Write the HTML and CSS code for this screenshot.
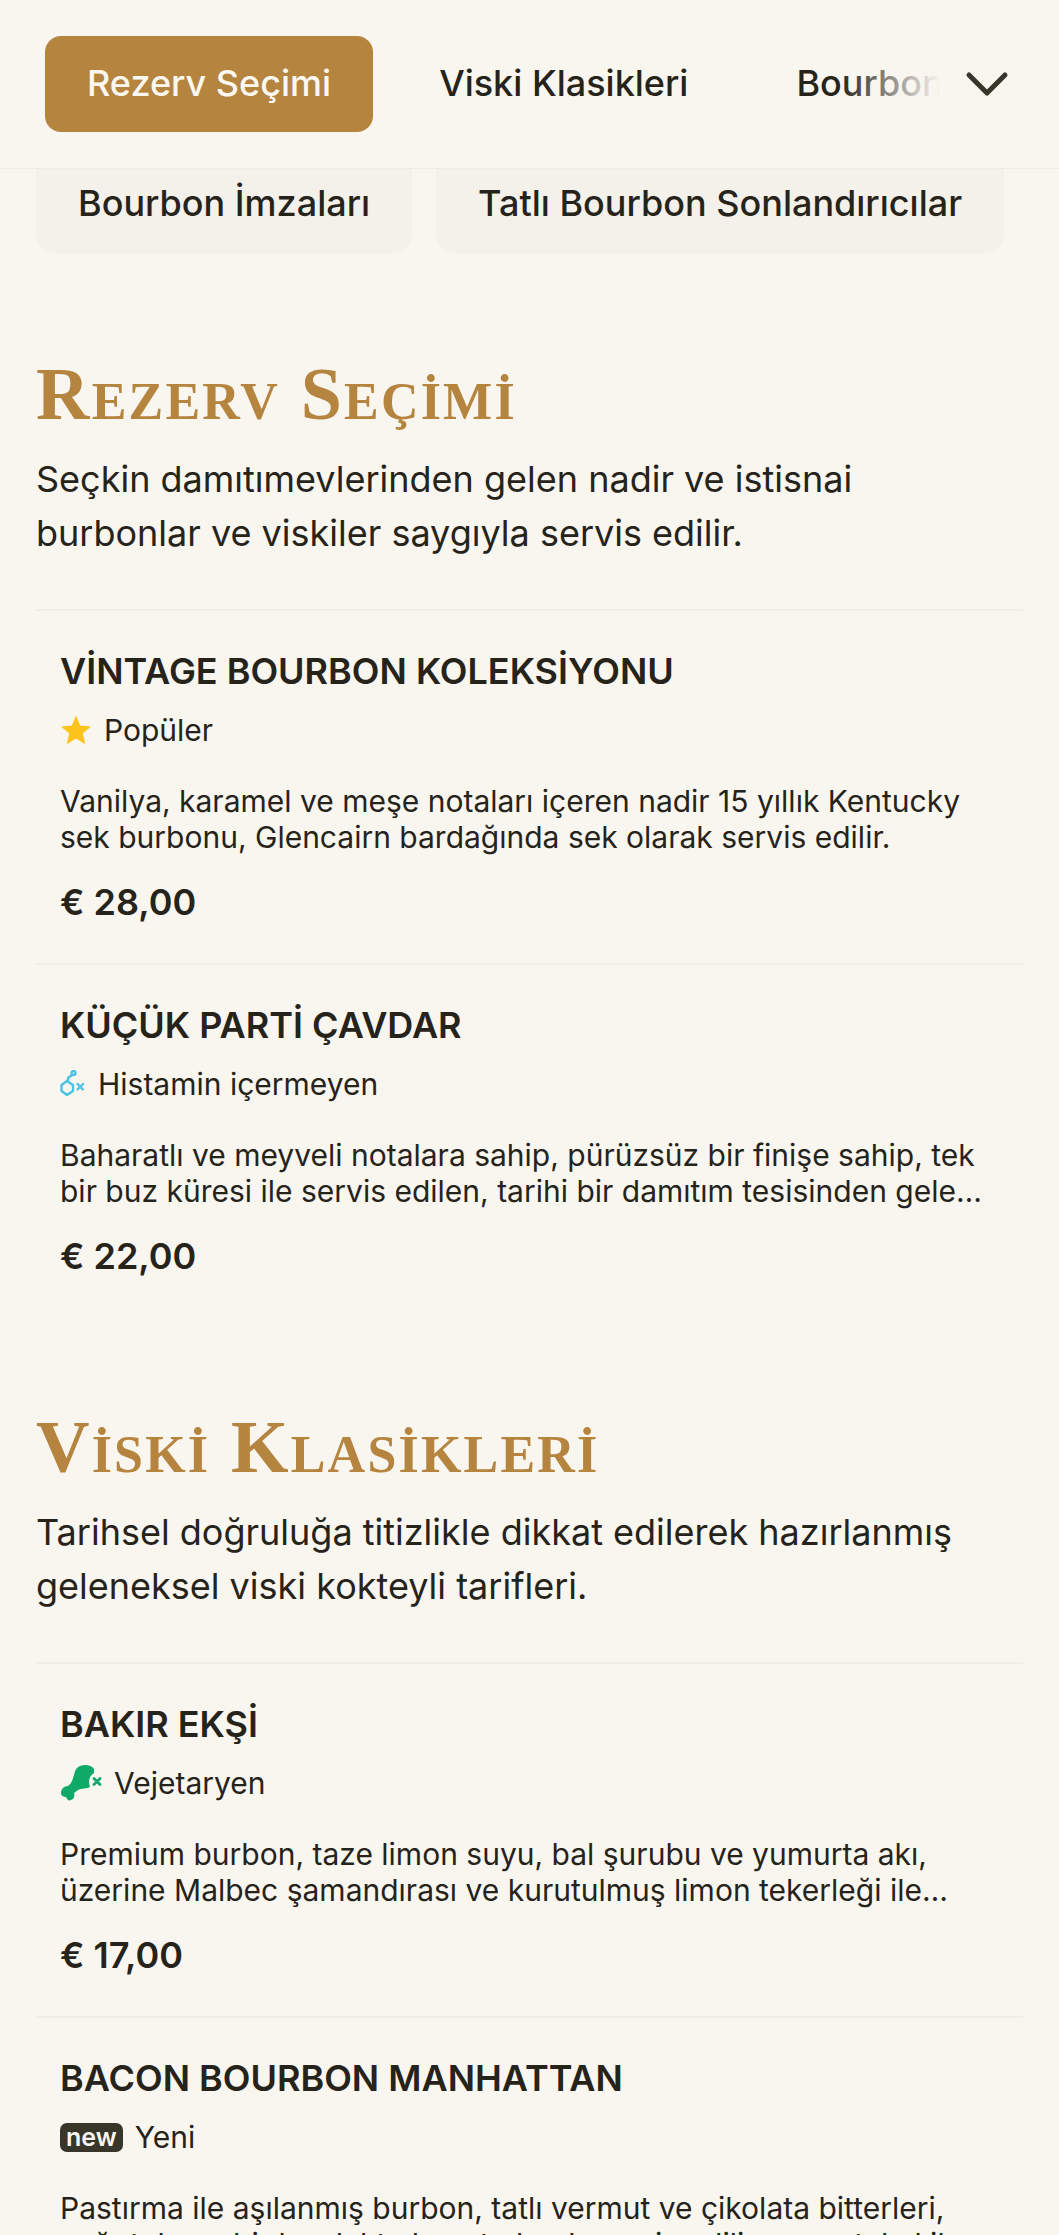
FILE: index.html
```html
<!DOCTYPE html>
<html lang="tr">
<head>
<meta charset="utf-8">
<title>Menü</title>
<link rel="stylesheet" href="styles.css">
</head>
<body>
<div class="page">
  <header class="topbar">
    <nav class="tabs">
      <a class="tab tab-active">Rezerv Seçimi</a>
      <a class="tab">Viski Klasikleri</a>
      <a class="tab">Bourbon İmzaları</a>
    </nav>
    <div class="fade"></div>
    <svg class="chevron" viewBox="0 0 44 28" width="44" height="28"><path d="M4 5 L22 23 L40 5" fill="none" stroke="#38352a" stroke-width="5" stroke-linecap="round" stroke-linejoin="round"/></svg>
  </header>
  <div class="dropdown">
    <a class="drop-item drop-first">Bourbon İmzaları</a>
    <a class="drop-item drop-second">Tatlı Bourbon Sonlandırıcılar</a>
  </div>

  <section class="section section-first">
    <h2 class="section-title">Rezerv Seçimi</h2>
    <p class="section-desc">Seçkin damıtımevlerinden gelen nadir ve istisnai burbonlar ve viskiler saygıyla servis edilir.</p>
    <article class="item">
      <h3 class="item-name">VİNTAGE BOURBON KOLEKSİYONU</h3>
      <div class="tag">
        <svg class="icon" viewBox="0 0 32 32" width="32" height="32"><path d="M16 1.5 L20.2 11.6 L31 12.5 L22.8 19.6 L25.3 30.2 L16 24.6 L6.7 30.2 L9.2 19.6 L1 12.5 L11.8 11.6 Z" fill="#fbc31c"/></svg>
        <span>Popüler</span>
      </div>
      <p class="item-desc">Vanilya, karamel ve meşe notaları içeren nadir 15 yıllık Kentucky sek burbonu, Glencairn bardağında sek olarak servis edilir.</p>
      <div class="price">€ 28,00</div>
    </article>
    <article class="item">
      <h3 class="item-name">KÜÇÜK PARTİ ÇAVDAR</h3>
      <div class="tag">
        <svg class="icon icon-hist" viewBox="0 0 26 28" width="26" height="28" fill="none" stroke="#4cc3e6" stroke-width="2.4" stroke-linecap="round" stroke-linejoin="round"><path d="M7 11 L13 15 L13 21 L7 25 L1.5 21 L1.5 15 Z"/><path d="M8 11 L8 8 L12 5"/><circle cx="13.5" cy="3" r="2"/><path d="M17.5 14 L23 19.5 M23 14 L17.5 19.5"/></svg>
        <span>Histamin içermeyen</span>
      </div>
      <p class="item-desc clamp">Baharatlı ve meyveli notalara sahip, pürüzsüz bir finişe sahip, tek bir buz küresi ile servis edilen, tarihi bir damıtım tesisinden gelen özel bir çavdar viskisi.</p>
      <div class="price">€ 22,00</div>
    </article>
  </section>

  <section class="section">
    <h2 class="section-title">Viski Klasikleri</h2>
    <p class="section-desc">Tarihsel doğruluğa titizlikle dikkat edilerek hazırlanmış geleneksel viski kokteyli tarifleri.</p>
    <article class="item">
      <h3 class="item-name">BAKIR EKŞİ</h3>
      <div class="tag">
        <svg class="icon icon-veg" viewBox="0 0 42 36" width="42" height="36"><path d="M34 4 C31 -1 21 -1 17 3 C14 6 14 13 11 18 L8 21 C4 21 1 24 1 28 C1 31 4 32 6 32 C7 35 9 36 11 35 C14 34 15 31 14 28 L18 25 C22 23 27 24 30 22 C28 17 29 11 34 8 Z" fill="#0fa968"/><path d="M34 13.5 L40 19.5 M40 13.5 L34 19.5" stroke="#0fa968" stroke-width="2.8" stroke-linecap="round"/></svg>
        <span>Vejetaryen</span>
      </div>
      <p class="item-desc clamp">Premium burbon, taze limon suyu, bal şurubu ve yumurta akı, üzerine Malbec şamandırası ve kurutulmuş limon tekerleği ile servis edilir ve süslenir.</p>
      <div class="price">€ 17,00</div>
    </article>
    <article class="item">
      <h3 class="item-name">BACON BOURBON MANHATTAN</h3>
      <div class="tag">
        <span class="new-badge">new</span>
        <span>Yeni</span>
      </div>
      <p class="item-desc clamp">Pastırma ile aşılanmış burbon, tatlı vermut ve çikolata bitterleri, soğutulmuş bir bardakta karıştırılarak servis edilir ve portakal ile süslenir.</p>
    </article>
  </section>
</div>
</body>
</html>
```
FILE: styles.css
```css
* { box-sizing: border-box; }
html, body { margin: 0; padding: 0; height: 2235px; overflow: hidden; }
body { background: #f9f6f0; color: #26231a; font-family: Inter, "Noto Sans", sans-serif; }
.page { width: 1059px; }

.topbar { position: relative; height: 169px; border-bottom: 1px solid #f0ede6; display: flex; align-items: flex-start; overflow: hidden; }
.tabs { display: flex; gap: 24px; padding: 36px 0 0 45px; white-space: nowrap; }
.tab { display: block; height: 96px; line-height: 94px; padding: 0 42px; font-size: 36px; font-weight: 500; border-radius: 16px; color: #26231a; }
.tab-active { background: #b5843f; color: #fbf8f2; }
.fade { position: absolute; left: 840px; top: 30px; width: 219px; height: 110px; background: linear-gradient(90deg, rgba(249,246,240,0) 0, #f9f6f0 100px); }
.chevron { position: absolute; left: 965px; top: 70px; }

.dropdown { display: flex; gap: 24px; padding-left: 36px; height: 84px; }
.drop-item { display: block; height: 84px; line-height: 68px; padding: 0 42px; font-size: 36px; font-weight: 500; background: #f4f0ea; border-radius: 0 0 20px 20px; }

.section { padding: 0 36px; }
.section-first { margin-top: 103px; }
.section + .section { margin-top: 92px; }
.section-title { margin: 0; font-family: "Liberation Serif", serif; font-variant: small-caps; font-size: 74px; letter-spacing: 2.2px; line-height: 76px; font-weight: 700; color: #b5843f; }
.section-desc { margin: 20px 0 0; font-size: 36px; line-height: 54px; width: 950px; }

.item { border-top: 2px solid #f1eee7; padding: 37px 24px 0; height: 354px; }
.section-desc + .item { margin-top: 49px; }
.item-name { margin: 0; font-size: 36px; line-height: 46px; font-weight: 600; }
.tag { display: flex; align-items: center; gap: 12px; margin-top: 13px; height: 46px; font-size: 30px; }
.icon { display: block; flex: none; }
.new-badge { display: block; background: #38352a; color: #f9f6f0; font-size: 25px; font-weight: 600; line-height: 29px; padding: 0 6px; border-radius: 7px; }
.item-desc { margin: 30px 0 0; font-size: 30px; line-height: 36px; max-width: 930px; }
.clamp { display: -webkit-box; -webkit-box-orient: vertical; -webkit-line-clamp: 2; overflow: hidden; }
.price { margin-top: 24px; font-size: 36px; line-height: 46px; font-weight: 600; }
```
